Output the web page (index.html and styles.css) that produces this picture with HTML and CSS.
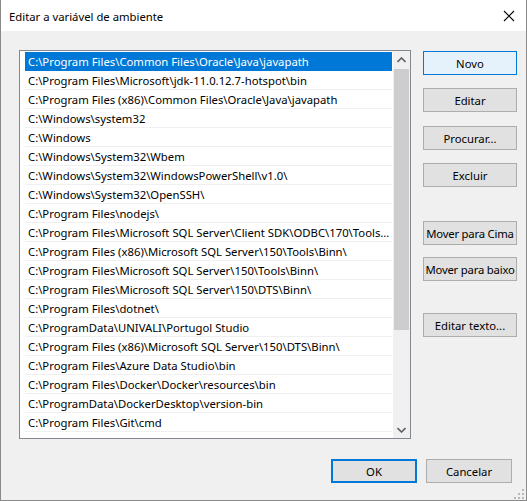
FILE: index.html
```html
<!DOCTYPE html>
<html lang="pt-BR">
<head>
    <meta charset="UTF-8">
    <title>Editar a variável de ambiente</title>
    <link rel="stylesheet" href="styles.css">
</head>
<body>
    <div class="window">
        <!-- Title bar -->
        <div class="titlebar">
            <span class="title">Editar a variável de ambiente</span>
            <svg class="close" width="12" height="12" viewBox="0 0 12 12">
                <path d="M1 1 L11 11 M11 1 L1 11" stroke="#000" stroke-width="1.1" fill="none"/>
            </svg>
        </div>

        <div class="body">
            <div class="main">
                <!-- Path list -->
                <div class="listbox">
                    <div class="rows">
                        <div class="row selected">C:\Program Files\Common Files\Oracle\Java\javapath</div>
                        <div class="row">C:\Program Files\Microsoft\jdk-11.0.12.7-hotspot\bin</div>
                        <div class="row">C:\Program Files (x86)\Common Files\Oracle\Java\javapath</div>
                        <div class="row">C:\Windows\system32</div>
                        <div class="row">C:\Windows</div>
                        <div class="row">C:\Windows\System32\Wbem</div>
                        <div class="row">C:\Windows\System32\WindowsPowerShell\v1.0\</div>
                        <div class="row">C:\Windows\System32\OpenSSH\</div>
                        <div class="row">C:\Program Files\nodejs\</div>
                        <div class="row">C:\Program Files\Microsoft SQL Server\Client SDK\ODBC\170\Tools\Binn\</div>
                        <div class="row">C:\Program Files (x86)\Microsoft SQL Server\150\Tools\Binn\</div>
                        <div class="row">C:\Program Files\Microsoft SQL Server\150\Tools\Binn\</div>
                        <div class="row">C:\Program Files\Microsoft SQL Server\150\DTS\Binn\</div>
                        <div class="row">C:\Program Files\dotnet\</div>
                        <div class="row">C:\ProgramData\UNIVALI\Portugol Studio</div>
                        <div class="row">C:\Program Files (x86)\Microsoft SQL Server\150\DTS\Binn\</div>
                        <div class="row">C:\Program Files\Azure Data Studio\bin</div>
                        <div class="row">C:\Program Files\Docker\Docker\resources\bin</div>
                        <div class="row">C:\ProgramData\DockerDesktop\version-bin</div>
                        <div class="row">C:\Program Files\Git\cmd</div>
                        <div class="row">C:\TDM-GCC-64\bin</div>
                    </div>
                    <div class="scrollbar">
                        <div class="arrow">
                            <svg width="9" height="6" viewBox="0 0 9 6"><path d="M0.5 5 L4.5 1 L8.5 5" stroke="#606060" stroke-width="1.6" fill="none"/></svg>
                        </div>
                        <div class="track">
                            <div class="thumb"></div>
                        </div>
                        <div class="arrow">
                            <svg width="9" height="6" viewBox="0 0 9 6"><path d="M0.5 1 L4.5 5 L8.5 1" stroke="#606060" stroke-width="1.6" fill="none"/></svg>
                        </div>
                    </div>
                </div>

                <!-- Action buttons -->
                <div class="actions">
                    <button class="btn default">Novo</button>
                    <button class="btn b-editar">Editar</button>
                    <button class="btn b-procurar">Procurar...</button>
                    <button class="btn b-excluir">Excluir</button>
                    <button class="btn b-cima tight">Mover para Cima</button>
                    <button class="btn b-baixo tight">Mover para baixo</button>
                    <button class="btn b-texto">Editar texto...</button>
                </div>
            </div>

            <div class="footer">
                <button class="btn wide focused">OK</button>
                <button class="btn wide">Cancelar</button>
            </div>

            <svg class="grip" width="10" height="10" viewBox="0 0 10 10">
                <rect x="8" y="0" width="2" height="2" fill="#b8b8b8"/>
                <rect x="4" y="4" width="2" height="2" fill="#b8b8b8"/>
                <rect x="8" y="4" width="2" height="2" fill="#b8b8b8"/>
                <rect x="0" y="8" width="2" height="2" fill="#b8b8b8"/>
                <rect x="4" y="8" width="2" height="2" fill="#b8b8b8"/>
                <rect x="8" y="8" width="2" height="2" fill="#b8b8b8"/>
            </svg>
        </div>
    </div>
</body>
</html>
```

FILE: styles.css
```css
* {
    box-sizing: border-box;
}

body {
    margin: 0;
    font-family: "Noto Sans", "Open Sans", sans-serif;
    font-size: 11.3px;
    color: #000;
    background-color: #f0f0f0;
}

.window {
    width: 527px;
    height: 501px;
    border: 1px solid #8a8a8a;
    border-top: none;
    background-color: #f0f0f0;
    display: flex;
    flex-direction: column;
}

.titlebar {
    height: 31px;
    background-color: #fff;
    display: flex;
    align-items: center;
    justify-content: space-between;
    padding: 0 11px 0 8px;
    flex-shrink: 0;
}

.title {
    margin-top: 1px;
}

.close {
    margin-top: 1px;
}

.body {
    position: relative;
    flex: 1;
    padding: 19px 0 0 18px;
}

.main {
    display: flex;
}

.listbox {
    width: 392px;
    height: 389px;
    border: 1px solid #828790;
    background-color: #fff;
    display: flex;
    overflow: hidden;
}

.rows {
    flex: 1;
    min-width: 0;
    padding: 1px 0 0 5px;
}

.row {
    height: 19px;
    line-height: 19px;
    padding-left: 3px;
    border-bottom: 1px solid #f0f0f0;
    white-space: nowrap;
    overflow: hidden;
    text-overflow: ellipsis;
}

.row.selected {
    background-color: #0078d7;
    color: #fff;
    border-bottom-color: #0078d7;
}

.scrollbar {
    width: 17px;
    background-color: #f0f0f0;
    display: flex;
    flex-direction: column;
    margin-left: 1px;
}

.arrow {
    height: 17px;
    display: flex;
    align-items: center;
    justify-content: center;
}

.track {
    flex: 1;
}

.thumb {
    height: 261px;
    margin: 1px 1px 0 1px;
    background-color: #cdcdcd;
}

.actions {
    display: flex;
    flex-direction: column;
    margin-left: 12px;
    padding-top: 1px;
}

.btn {
    font-family: inherit;
    font-size: 11.3px;
    color: #000;
    width: 94px;
    height: 24px;
    padding: 0;
    background-color: #e1e1e1;
    border: 1px solid #adadad;
    white-space: nowrap;
}

.btn.tight {
    letter-spacing: -0.2px;
}

.btn.default {
    background-color: #e5f1fb;
    border-color: #0078d7;
}

.b-editar { margin-top: 13px; }
.b-procurar { margin-top: 14px; }
.b-excluir { margin-top: 13px; }
.b-cima { margin-top: 34px; }
.b-baixo { margin-top: 12px; }
.b-texto { margin-top: 32px; }

.footer {
    display: flex;
    justify-content: flex-end;
    gap: 9px;
    padding-right: 14px;
    margin-top: 20px;
}

.btn.wide {
    width: 86px;
}

.btn.focused {
    border: 2px solid #0078d7;
}

.grip {
    position: absolute;
    right: 2px;
    bottom: 1px;
}
```
